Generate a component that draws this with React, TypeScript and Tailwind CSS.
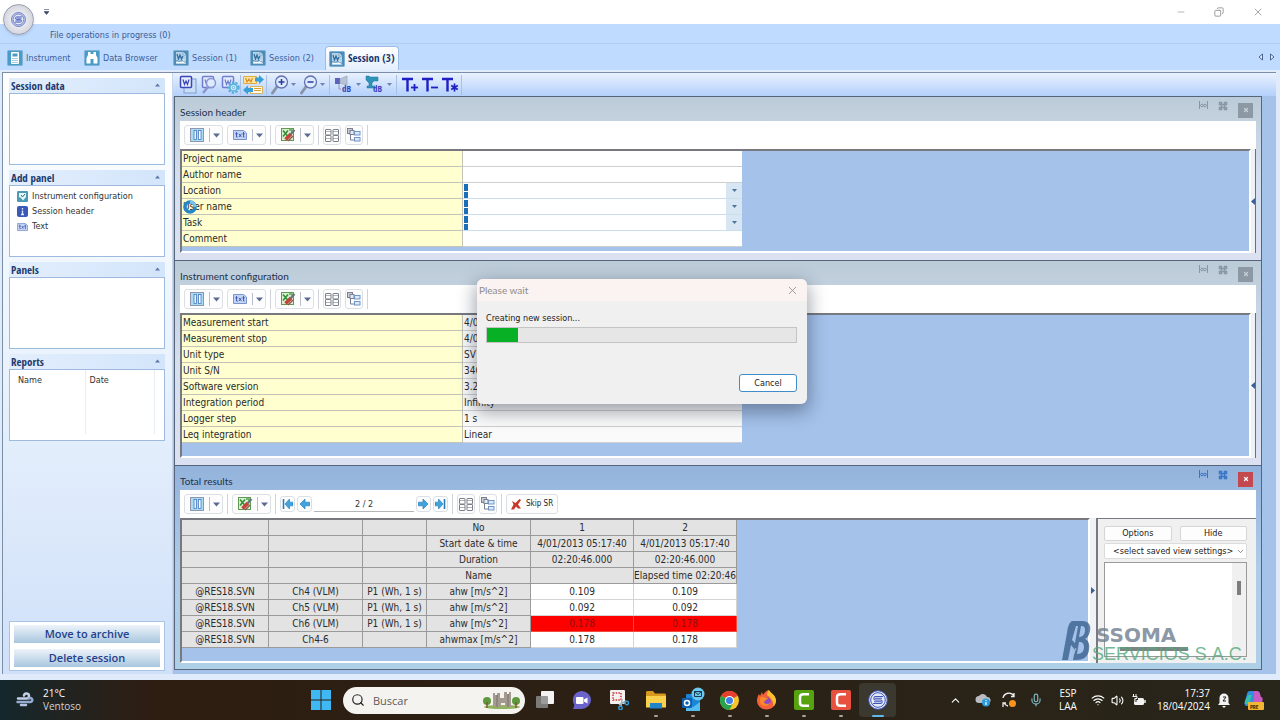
import React from "react";
import {
  Search,
  Minus,
  X,
  Copy,
  ChevronUp,
  ChevronDown,
  Wifi,
  Volume2,
  Mic,
} from "lucide-react";
import clsx from "clsx";

const UI = "font-['DejaVu_Sans_Condensed','DejaVu_Sans',sans-serif]";
const BOLD = "font-['Open_Sans_Condensed','Open_Sans',sans-serif] font-bold";

const tabs = [
  { label: "Instrument", kind: "instrument", width: "w-[77px]" },
  { label: "Data Browser", kind: "browser", width: "w-[89px]" },
  { label: "Session (1)", kind: "session", width: "w-[77px]" },
  { label: "Session (2)", kind: "session", width: "w-[80px]" },
  { label: "Session (3)", kind: "session", width: "w-[74px]", active: true },
];

const headerFields = [
  { label: "Project name", id: "project" },
  { label: "Author name", id: "author" },
  { label: "Location", id: "location", list: true },
  { label: "User name", id: "user", list: true },
  { label: "Task", id: "task", list: true },
  { label: "Comment", id: "comment" },
];

const configRows = [
  ["Measurement start", "4/01"],
  ["Measurement stop", "4/01"],
  ["Unit type", "SV 106"],
  ["Unit S/N", "34690"],
  ["Software version", "3.2"],
  ["Integration period", "Infinity"],
  ["Logger step", "1 s"],
  ["Leq integration", "Linear"],
];

const resultHead = [
  ["No", "1", "2"],
  ["Start date & time", "4/01/2013 05:17:40", "4/01/2013 05:17:40"],
  ["Duration", "02:20:46.000", "02:20:46.000"],
  ["Name", "", "Elapsed time 02:20:46"],
];

const resultRows = [
  ["@RES18.SVN", "Ch4 (VLM)", "P1 (Wh, 1 s)", "ahw [m/s^2]", "0.109", "0.109"],
  ["@RES18.SVN", "Ch5 (VLM)", "P1 (Wh, 1 s)", "ahw [m/s^2]", "0.092", "0.092"],
  ["@RES18.SVN", "Ch6 (VLM)", "P1 (Wh, 1 s)", "ahw [m/s^2]", "0.178", "0.178"],
  ["@RES18.SVN", "Ch4-6", "", "ahwmax [m/s^2]", "0.178", "0.178"],
];

/* ---------- icons ---------- */

const TabIcon: React.FC<{ kind: string }> = ({ kind }) => (
  <svg width="16" height="16" viewBox="0 0 16 16" className="shrink-0">
    <rect x="0.5" y="0.5" width="15" height="15" rx="1" fill={kind === "session" ? "#4f8cb8" : "#4a9cc8"} stroke="#7fb2d4" />
    {kind === "instrument" && (
      <>
        <rect x="4" y="2" width="8" height="12" rx="1" fill="#fff" />
        <rect x="5.5" y="3.5" width="5" height="3" fill="#4a9cc8" />
        <path d="M5.5 8.5h1M7.5 8.5h1M9.5 8.5h1M5.5 10.5h1M7.5 10.5h1M9.5 10.5h1M5.5 12.5h1M7.5 12.5h1M9.5 12.5h1" stroke="#4a9cc8" />
      </>
    )}
    {kind === "browser" && (
      <path d="M4 2h2.500v2H9.500V2H12v3l1.500 3v5.500H9.500V9h-3v4.500H2.500V8L4 5z" fill="#fff" />
    )}
    {kind === "session" && (
      <>
        <path d="M3 2h7l3 3v9H3z" fill="#b5d2e6" />
        <path d="M10 2v3h3" fill="#e3eff7" stroke="#4f8cb8" strokeWidth=".6" />
        <path d="M4 4l1.500 5L7 5l1.500 4L10 6" stroke="#2f6ca0" fill="none" strokeWidth="1.200" />
        <path d="M3 13l2.500-2.500 3 2 2-3L13 13z" fill="#fff" />
        <path d="M3 10.500l3 1 3-1 4 2" stroke="#3d7dac" fill="none" strokeWidth=".8" />
      </>
    )}
  </svg>
);

const WordPage = () => (
  <g>
    <rect x="1.500" y="1.500" width="11" height="11" rx="1" fill="#e8efff" stroke="#3a45b8" strokeWidth="1.500" />
    <path d="M4 4.500l1.500 5L7 6l1.500 3.500L10 4.500" stroke="#3a45b8" fill="none" strokeWidth="1.200" />
  </g>
);

const WordDocs = () => (
  <svg width="18" height="20" viewBox="0 0 18 20">
    <rect x="5" y="4" width="12" height="14" fill="#c9ddf4" stroke="#7f9fd0" />
    <WordPage />
  </svg>
);

const WordFind = () => (
  <svg width="16" height="20" viewBox="0 0 16 20">
    <g opacity=".65"><WordPage /></g>
    <circle cx="10" cy="8" r="4.500" fill="#dceafd" stroke="#8b94cf" strokeWidth="1.500" />
    <path d="M7 12l-5 6" stroke="#8b94cf" strokeWidth="2.500" />
  </svg>
);

const WordGear = () => (
  <svg width="19" height="20" viewBox="0 0 19 20">
    <g opacity=".65"><WordPage /></g>
    <circle cx="12.500" cy="12.500" r="5.200" fill="none" stroke="#55aeda" strokeWidth="2" strokeDasharray="2.200 1.500" />
    <circle cx="12.500" cy="12.500" r="3.600" fill="#cdeaf8" stroke="#55aeda" strokeWidth="1.500" />
    <circle cx="12.500" cy="12.500" r="1.200" fill="#fff" stroke="#55aeda" />
  </svg>
);

const SwapDocs = () => (
  <svg width="21" height="20" viewBox="0 0 21 20">
    <path d="M.5 1.500h13v7H.5z" fill="#fbe6a8" stroke="#e0ae3c" />
    <path d="M2.500 3l1.500 4 2-3 2 3 1.500-4" stroke="#e08a1c" strokeWidth="1.200" fill="none" />
    <path d="M12 2.500h4V0l5 4.500L16 9V6.500h-4z" fill="#38a0d8" />
    <path d="M7.500 11.500h12v7h-12z" fill="#fffaf0" stroke="#d8b45e" />
    <path d="M11 13.500h7M11 15.500h7" stroke="#e09a28" />
    <path d="M10 13H5v-2.500L0 15l5 4.500V17h5z" fill="#38a0d8" />
  </svg>
);

const ZoomGlass: React.FC<{ plus?: boolean }> = ({ plus }) => (
  <svg width="18" height="20" viewBox="0 0 18 20">
    <path d="M6.500 11L1.500 18" stroke="#8a93a8" strokeWidth="3" strokeLinecap="round" />
    <circle cx="10.500" cy="7" r="6" fill="#dcecff" stroke="#6670b0" strokeWidth="1.300" />
    <path d={plus ? "M7.500 7h6M10.500 4v6" : "M7.500 7h6"} stroke="#2d37a0" strokeWidth="1.500" />
  </svg>
);

const DbIcon: React.FC<{ drill?: boolean }> = ({ drill }) => (
  <svg width="20" height="20" viewBox="0 0 20 20">
    {drill ? (
      <path d="M1 1h3l1 1h8v4H9l-2 2v3h3v2H2v-2h2V8L1 5z" fill="#2f93b8" stroke="#23779c" strokeWidth=".5" />
    ) : (
      <>
        <path d="M1 3h5v6H1z" fill="#5a62bb" />
        <path d="M6 4l7-3v9L6 8z" fill="#b9c3d6" stroke="#8f9ab2" strokeWidth=".6" />
        <path d="M5 9v5h2" stroke="#8f9ab2" fill="none" />
      </>
    )}
    <text x="8" y="17" fontSize="9" fontWeight="bold" fill="#3b3fc4" fontFamily="Open Sans Condensed, sans-serif">dB</text>
  </svg>
);

const TextSize: React.FC<{ mark: string }> = ({ mark }) => (
  <svg width="18" height="20" viewBox="0 0 18 20" stroke="#1f1fc4" fill="none">
    <path d="M1 4h11M6.500 4v12.500" strokeWidth="2.400" />
    {mark !== "*" && <path d="M10 12.500h7" strokeWidth="1.800" />}
    {mark === "+" && <path d="M13.500 9v7" strokeWidth="1.800" />}
    {mark === "*" && <path d="M13.500 8.500v8M10.200 10.500l6.600 4M16.800 10.500l-6.600 4" strokeWidth="1.700" />}
  </svg>
);

const ColumnsIcon = () => (
  <svg width="14" height="14" viewBox="0 0 14 14">
    <rect x=".5" y=".5" width="13" height="13" fill="#a8dcf4" stroke="#8e97ad" />
    <rect x="4" y="2.500" width="2.500" height="9" fill="#e3f3fc" stroke="#4279c0" strokeWidth=".8" />
    <rect x="8.500" y="2.500" width="2.500" height="9" fill="#fff" stroke="#4279c0" strokeWidth=".8" />
  </svg>
);

const TxtIcon = () => (
  <svg width="14" height="12" viewBox="0 0 14 12">
    <path d="M.5 1.500h10l3 2.500v6.500H.5z" fill="#c3d3f2" stroke="#7b93cf" />
    <path d="M3.500 3v5h1.200M2.300 4.800h2.400M6 4.800l2.400 3.200M8.400 4.800L6 8M10.500 3v5h1M9.500 4.800h2.300" stroke="#3453b4" fill="none" strokeWidth=".9" />
  </svg>
);

const SheetToolIcon = () => (
  <svg width="15" height="14" viewBox="0 0 15 14">
    <rect x=".5" y=".5" width="12" height="12" fill="#dcefd0" stroke="#5e9a54" />
    <path d="M2 2.500l5 6M7 2.500l-5 6" stroke="#2f9238" strokeWidth="1.600" />
    <path d="M8 2h3v3" stroke="#53a857" fill="none" strokeWidth="1.500" />
    <path d="M4.500 11.500L10 6" stroke="#c4443a" strokeWidth="3.500" />
    <path d="M9.500 6.500L13.500 2" stroke="#6b7480" strokeWidth="2.200" />
    <path d="M7 13l5-5" stroke="#8c5a50" strokeWidth="1.500" />
  </svg>
);

const SplitIcon = () => (
  <svg width="14" height="13" viewBox="0 0 14 13" fill="#fff" stroke="#7a7f88">
    <rect x=".5" y=".5" width="5.500" height="5.500" rx=".5" />
    <rect x=".5" y="6.500" width="5.500" height="6" rx=".5" />
    <rect x="8" y=".5" width="5.500" height="5.500" rx=".5" />
    <rect x="8" y="6.500" width="5.500" height="6" rx=".5" />
    <path d="M1 2.500h5M8 2.500h5M1 9.500h5M8 9.500h5" strokeWidth=".6" />
  </svg>
);

const TreeIcon = () => (
  <svg width="14" height="14" viewBox="0 0 14 14" fill="none" stroke="#7a8090">
    <rect x=".5" y=".5" width="5" height="5" fill="#c9ced6" />
    <rect x="3" y="2.500" width="4" height="4" fill="#e8ebf0" />
    <rect x="7.500" y="3.500" width="5.500" height="3.500" fill="#dceaf8" stroke="#6e96c8" />
    <rect x="7.500" y="9.500" width="5.500" height="3.500" fill="#dceaf8" stroke="#6e96c8" />
    <path d="M3.500 7v5h4" />
  </svg>
);

const NavArrow: React.FC<{ back?: boolean; end?: boolean }> = ({ back, end }) => (
  <svg width="11" height="12" viewBox="0 0 11 12">
    <g transform={back ? "matrix(-1 0 0 1 11 0)" : undefined}>
      <path d={end ? "M0 4.200h3.500V1L8 6l-4.500 5V7.800H0z" : "M.5 4.200H5V1l5 5-5 5V7.800H.5z"} fill="#3fa3dc" stroke="#2b7fb8" strokeWidth=".7" />
      {end && <path d="M9.500 1v10" stroke="#2b7fb8" strokeWidth="1.600" />}
    </g>
  </svg>
);

const SvanLogo: React.FC<{ size: number }> = ({ size }) => (
  <svg width={size} height={size} viewBox="0 0 20 20" fill="none" stroke="#3f55b8">
    <circle cx="10" cy="10" r="9.300" fill="#e4e9f6" strokeWidth="1" />
    <circle cx="10" cy="10" r="7.300" strokeWidth="1" />
    <path d="M15 6.500H7.500c-2.200 0-2.200 3.500 0 3.500h5c2.200 0 2.200 3.500 0 3.500H5M7 8.200h7M6 11.800h7" strokeWidth="1.100" />
  </svg>
);

const Caret: React.FC<{ className?: string }> = ({ className }) => (
  <svg width="7" height="5" viewBox="0 0 7 5" className={className}>
    <path d="M0 .5h7L3.500 4.500z" fill="currentColor" />
  </svg>
);

/* ---------- ribbon ---------- */

const Divider = () => <span className="h-5 w-px bg-[#a9c0e6]" />;

const ToolButton: React.FC<{ label: string; menu?: boolean; children: React.ReactNode }> = ({ label, menu, children }) => (
  <button aria-label={label} className="flex items-center">
    {children}
    {menu && <Caret className="ml-[2px] w-[5px] text-[#6c83b4]" />}
  </button>
);

const Ribbon = () => (
  <div className="flex h-[23px] items-center bg-linear-to-b from-[#e9f1fe] to-[#b4d0fb] pl-[6px]">
    <div className="flex items-center gap-1">
      <ToolButton label="New report"><WordDocs /></ToolButton>
      <ToolButton label="Find report"><WordFind /></ToolButton>
      <ToolButton label="Report options"><WordGear /></ToolButton>
    </div>
    <div className="flex items-center gap-[2px]">
      <Divider />
      <ToolButton label="Exchange"><SwapDocs /></ToolButton>
      <Divider />
    </div>
    <div className="ml-1 flex items-center gap-1">
      <ToolButton label="Zoom in" menu><ZoomGlass plus /></ToolButton>
      <ToolButton label="Zoom out" menu><ZoomGlass /></ToolButton>
      <Divider />
      <ToolButton label="Sound level" menu><DbIcon /></ToolButton>
      <ToolButton label="Vibration level" menu><DbIcon drill /></ToolButton>
      <Divider />
    </div>
    <div className="ml-1 flex items-center gap-[2px]">
      <ToolButton label="Larger text"><TextSize mark="+" /></ToolButton>
      <ToolButton label="Smaller text"><TextSize mark="-" /></ToolButton>
      <ToolButton label="Default text"><TextSize mark="*" /></ToolButton>
      <Divider />
    </div>
  </div>
);

/* ---------- sidebar ---------- */

const SideGroup: React.FC<{ title: string; children?: React.ReactNode }> = ({ title, children }) => (
  <section className="mb-[5px]">
    <h2 className={`${BOLD} flex h-[15px] items-center justify-between bg-linear-to-r from-[#e3eefc] to-[#d3e5fb] pt-[2px] pr-[5px] pl-[2px] text-[11px] text-[#1c3a6e]`}>
      {title}
      <svg width="5" height="4" viewBox="0 0 5 4" className="mb-1"><path d="M0 3.500L2.500.5 5 3.500z" fill="#5c78a8" /></svg>
    </h2>
    <div className="h-[72px] border border-[#9ebade] bg-white">{children}</div>
  </section>
);

const panelItems = [
  {
    label: "Instrument configuration",
    icon: (
      <svg width="11" height="11" viewBox="0 0 11 11">
        <rect width="11" height="11" rx="1" fill="#4b9bb4" />
        <path d="M2 2h7v4L6 9.500 4 7 2 6z" fill="#eaf6fa" />
        <path d="M4 4l1.500 2L8 3" stroke="#28728c" fill="none" />
      </svg>
    ),
  },
  {
    label: "Session header",
    icon: (
      <svg width="11" height="11" viewBox="0 0 11 11">
        <rect width="11" height="11" rx="2" fill="#3a58b8" />
        <path d="M5.500 2v1.500M5.500 4.500V8M4 8.500h3" stroke="#e3ebff" strokeWidth="1.300" />
      </svg>
    ),
  },
  { label: "Text", icon: <TxtIcon /> },
];

const Sidebar = () => (
  <aside className="flex w-[170px] shrink-0 flex-col border-r border-[#c5d6ee] bg-linear-to-b from-white via-[#e9f2fd] to-[#cfe0f8] pt-[5px] pr-[7px] pl-[6px]">
    <SideGroup title="Session data" />
    <SideGroup title="Add panel">
      <ul className="pt-[3px] pl-[7px]">
        {panelItems.map((item) => (
          <li key={item.label}>
            <button className="flex h-[15px] items-center gap-1 text-[9px] text-[#333]">
              <span className="flex w-[11px] justify-center">{item.icon}</span>
              {item.label}
            </button>
          </li>
        ))}
      </ul>
    </SideGroup>
    <SideGroup title="Panels" />
    <SideGroup title="Reports">
      <table className="h-[64px] w-[145px] text-left text-[9px] text-[#333]">
        <thead>
          <tr>
            <th className="w-[75px] border-r border-[#e8edf4] pt-1 pl-2 align-top font-normal">Name</th>
            <th className="border-r border-[#e8edf4] pt-1 pl-1 align-top font-normal">Date</th>
          </tr>
        </thead>
      </table>
    </SideGroup>
    <div className="mt-auto mb-[3px] flex flex-col gap-[6px] border border-[#a8c4e6] bg-white px-1 py-[3px]">
      {["Move to archive", "Delete session"].map((label) => (
        <button
          key={label}
          className="h-[18px] bg-linear-to-b from-[#edf3fa] to-[#a9c6de] font-['Open_Sans',sans-serif] text-[11px] leading-[18px] font-semibold text-[#24408c]"
        >
          {label}
        </button>
      ))}
    </div>
  </aside>
);

/* ---------- panels ---------- */

const SplitButton: React.FC<{ label: string; children: React.ReactNode }> = ({ label, children }) => (
  <button aria-label={label} className="flex h-[20px] w-[39px] items-center rounded-[3px] border border-[#dcdfe4] bg-[#fdfdfd]">
    <span className="flex w-[25px] justify-center border-r border-[#b9bec8]">{children}</span>
    <span className="flex flex-1 justify-center"><Caret className="text-[#5c6b94]" /></span>
  </button>
);

const SquareButton: React.FC<{ label: string; narrow?: boolean; children: React.ReactNode }> = ({ label, narrow, children }) => (
  <button
    aria-label={label}
    className={clsx(
      "flex items-center justify-center rounded-[3px] border border-[#dcdfe4] bg-[#fdfdfd]",
      narrow ? "h-4 w-[15px]" : "h-[20px] w-[18px]"
    )}
  >
    {children}
  </button>
);

const BarLine = () => <span className="h-[20px] w-px bg-[#d0d4da]" />;

const LayoutButtons = () => (
  <>
    <SquareButton label="Split view"><SplitIcon /></SquareButton>
    <SquareButton label="Tree view"><TreeIcon /></SquareButton>
    <BarLine />
  </>
);

const EditButtons = () => (
  <>
    <SplitButton label="Columns"><ColumnsIcon /></SplitButton>
    <SplitButton label="Text"><TxtIcon /></SplitButton>
    <BarLine />
    <SplitButton label="Export"><SheetToolIcon /></SplitButton>
    <BarLine />
    <LayoutButtons />
  </>
);

interface PanelProps {
  title: string;
  active?: boolean;
  bodyClass: string;
  toolbar: React.ReactNode;
  aside?: React.ReactNode;
  children: React.ReactNode;
}

const Panel: React.FC<PanelProps> = ({ title, active, bodyClass, toolbar, aside, children }) => (
  <section
    className={clsx(
      "flex flex-col border-t border-r border-l border-[#56657a] px-[5px]",
      active ? "flex-1 border-b bg-linear-to-b from-[#94b3dc] via-[#aecbe8] to-[#aed0e6] pb-[6px]" : "bg-linear-to-b from-[#bccbd8] via-[#d5e0ee] to-[#dbe1f0] pb-[7px]"
    )}
  >
    <div className="flex h-[24px] items-center">
      <h2 className="flex-1 pt-[6px] font-['Lato',sans-serif] text-[10px] leading-4 text-[#22304a]">{title}</h2>
      <div className={clsx("flex items-start gap-[10px] pr-[3px]", active ? "text-[#3a76c4]" : "text-[#8797a5]")}>
        <button aria-label="Fit width">
          <svg width="9" height="8" viewBox="0 0 9 8" fill="none" stroke="currentColor">
            <path d="M.5 0v8M8.500 0v8" />
            <circle cx="3" cy="4.500" r="1.300" />
            <circle cx="6" cy="4.500" r="1.300" />
          </svg>
        </button>
        <button aria-label="Maximize panel">
          <svg width="10" height="10" viewBox="0 0 10 10" fill="none" stroke="currentColor" strokeWidth="1.500">
            <path d="M3.500 3.500h3v3h-3zM3.500 3.500h-2v-2h2zM6.500 3.500v-2h2v2zM3.500 6.500v2h-2v-2zM6.500 6.500h2v2h-2z" />
          </svg>
        </button>
        <button
          aria-label="Close panel"
          className={clsx("mt-[2px] flex h-[15px] w-[15px] items-center justify-center", active ? "bg-[#c4494f] text-white" : "bg-[#8c98a4] text-[#c5ced6]")}
        >
          <X size={6} strokeWidth={5} />
        </button>
      </div>
    </div>
    <div className="flex h-[28px] items-center gap-1 bg-white pl-1">{toolbar}</div>
    <div className="flex flex-1">
      <div className={clsx("flex-1 border-2 border-t-[#77797f] border-r-white border-b-white border-l-[#77797f] bg-[#a4c2ea]", bodyClass)}>
        {children}
      </div>
      {aside ?? (
        <div className="flex w-[5px] items-center border-r border-[#6a7078] bg-[#eef1f5]">
          <svg width="4" height="7" viewBox="0 0 4 7"><path d="M4 0v7L0 3.500z" fill="#3d5f98" /></svg>
        </div>
      )}
    </div>
  </section>
);

const gridTable = "border-separate border-spacing-0 table-fixed text-[10px] text-[#2b2b2b]";
const nameCell = "w-[281px] border-r border-b border-[#c3c3b8] bg-[#ffffcf] p-0 pl-px text-left leading-[15px] font-normal";

const HeaderForm = () => (
  <table className={`${gridTable} w-[560px]`}>
    <tbody>
      {headerFields.map((f) => (
        <tr key={f.id} className="h-4">
          <th className={nameCell}>
            <label htmlFor={f.id}>{f.label}</label>
          </th>
          <td className={clsx("border-b bg-white p-0", f.list ? "border-[#c9dfee]" : "border-[#cfcfcf]")}>
            {f.list ? (
              <div className="flex h-[15px] items-center">
                <span className="ml-px flex w-1 flex-col gap-px">
                  <span className="h-[7px] bg-[#1a6fb8]" />
                  <span className="h-[6px] bg-[#1a6fb8]" />
                </span>
                <select id={f.id} className="h-[15px] flex-1 appearance-none bg-white outline-none">
                  <option></option>
                </select>
                <span className="pointer-events-none flex h-[15px] w-4 items-center justify-center bg-[#d8e6f3]">
                  <Caret className="w-[5px] text-[#4f7396]" />
                </span>
              </div>
            ) : (
              <input id={f.id} className="block h-[15px] w-full bg-white px-px outline-none" />
            )}
          </td>
        </tr>
      ))}
    </tbody>
  </table>
);

const ConfigTable = () => (
  <table className={`${gridTable} w-[560px]`}>
    <tbody>
      {configRows.map(([name, value]) => (
        <tr key={name} className="h-4">
          <th className={nameCell}>{name}</th>
          <td className="border-b border-[#cfcfcf] bg-[#fafafa] p-0 pl-px leading-[15px]">{value}</td>
        </tr>
      ))}
    </tbody>
  </table>
);

const headCell = "border-r border-b border-[#9a9a9a] bg-[#e3e3e3] p-0 leading-[15px] font-normal whitespace-nowrap";

const ResultsTable = () => (
  <table className={`${gridTable} w-[555px] text-center`}>
    <colgroup>
      <col className="w-[87px]" />
      <col className="w-[94px]" />
      <col className="w-[64px]" />
      <col className="w-[104px]" />
      <col className="w-[103px]" />
      <col className="w-[103px]" />
    </colgroup>
    <thead>
      {resultHead.map(([name, a, b]) => (
        <tr key={name} className="h-4">
          <td className={headCell} />
          <td className={headCell} />
          <td className={headCell} />
          <th className={headCell}>{name}</th>
          <th className={headCell}>{a}</th>
          <th className={headCell}>{b}</th>
        </tr>
      ))}
    </thead>
    <tbody>
      {resultRows.map((row, r) => (
        <tr key={r} className="h-4">
          {row.map((cell, i) =>
            i < 4 ? (
              <th key={i} className={headCell}>{cell}</th>
            ) : (
              <td
                key={i}
                className={clsx(
                  "border-r border-b p-0 leading-[15px]",
                  r === 2 ? "border-[#f04a3c] bg-[#fe0000] text-[#8c1010]" : "border-[#d4d4d4] bg-white"
                )}
              >
                {cell}
              </td>
            )
          )}
        </tr>
      ))}
    </tbody>
  </table>
);

const ViewSettings = () => (
  <>
    <div className="flex w-[6px] items-center bg-[#eef2f7]">
      <svg width="5" height="7" viewBox="0 0 5 7"><path d="M1 0v7l4-3.500z" fill="#3d5f98" /></svg>
    </div>
    <div className="relative flex w-[160px] flex-col border-t border-l-2 border-[#77797f] bg-[#f0f0f0] pt-[7px] pr-[9px] pb-[6px] pl-[6px] text-[9px] text-[#222]">
      <div className="flex gap-2">
        <button className="h-[15px] flex-1 rounded-[2px] border border-[#d6d6d6] bg-[#fdfdfd] leading-[13px]">Options</button>
        <button className="h-[15px] flex-1 rounded-[2px] border border-[#d6d6d6] bg-[#fdfdfd] leading-[13px]">Hide</button>
      </div>
      <div className="relative mt-[2px]">
        <select aria-label="View settings" className="block h-[16px] w-full appearance-none rounded-[2px] border border-[#dcdcdc] bg-white pl-[8px] text-[9px] leading-[14px]">
          <option>&lt;select saved view settings&gt;</option>
        </select>
        <ChevronDown size={9} className="pointer-events-none absolute top-1 right-[2px] text-[#666]" />
      </div>
      <div className="mt-[3px] flex flex-1 justify-end border border-[#9a9a9a] bg-white">
        <div className="flex w-[14px] justify-center bg-[#f0f0f0] pt-[18px]">
          <span className="h-[14px] w-1 bg-[#7d7d7d]" />
        </div>
      </div>
      <span className="absolute bottom-[12px] left-[22px] h-1 w-[68px] bg-[#7d8484]" />
      <div className="pointer-events-none absolute -bottom-px -left-[36px] flex opacity-80">
        <svg width="30" height="41" viewBox="0 0 30 41" className="shrink-0">
          <path fillRule="evenodd" d="M10 1H20C28 1 29 7 28 11 27 16 25 18 23 19 27 21 28 25 27 30 26 37 21 40 14 40H11L13 30 9 25 6 40H0L5 13C6 6 7 3 10 1ZM14 6 10 20 13 23 16 6ZM19 6 17 17C21 17 23 14 23 10 23 7 22 6 19 6ZM17 22 15 34C20 34 22 31 22 27 22 24 21 22 17 22Z" fill="#3d628f" />
          <path d="M10 28l2 5 2-5M12 33l-2 5" stroke="#9cc5d6" fill="none" />
        </svg>
        <div className="pt-[6px] whitespace-nowrap">
          <p className="pl-1 font-['DejaVu_Sans',sans-serif] text-[20px] leading-[18px] font-bold text-[#707f90]">SSOMA</p>
          <p className="font-['Liberation_Sans',sans-serif] text-[18px] leading-[20px] text-[#55a87c]">SERVICIOS S.A.C.</p>
        </div>
      </div>
    </div>
  </>
);

const ResultsToolbar = () => (
  <>
    <SplitButton label="Columns"><ColumnsIcon /></SplitButton>
    <BarLine />
    <SplitButton label="Export"><SheetToolIcon /></SplitButton>
    <BarLine />
    <div className="flex items-end gap-[2px]">
      <SquareButton label="First" narrow><NavArrow back end /></SquareButton>
      <SquareButton label="Previous" narrow><NavArrow back /></SquareButton>
      <input
        aria-label="Record"
        defaultValue="2 / 2"
        className="h-4 w-[100px] border-b border-[#b5b5b5] text-center text-[9px] text-[#333] outline-none"
      />
      <SquareButton label="Next" narrow><NavArrow /></SquareButton>
      <SquareButton label="Last" narrow><NavArrow end /></SquareButton>
    </div>
    <BarLine />
    <LayoutButtons />
    <button className="flex h-[20px] items-center gap-1 rounded-[3px] border border-[#dcdfe4] bg-[#fdfdfd] px-1 text-[8px] text-[#222]">
      <svg width="11" height="11" viewBox="0 0 11 11"><path d="M1 2l3.500 2L8.500 0l1.500 1-3 4.500L10 9.500H7L5 7.500 3 10.500H0l2.500-5z" fill="#c8382a" /></svg>
      Skip SR
    </button>
  </>
);

/* ---------- dialog ---------- */

const WaitDialog = () => (
  <div
    role="dialog"
    aria-labelledby="wait-title"
    className="absolute top-[279px] left-[477px] w-[330px] rounded-md bg-[#f0f0f0] text-[#222] shadow-[0_6px_18px_2px_rgba(20,30,50,0.4)]"
  >
    <div className="flex h-[22px] items-center justify-between rounded-t-md bg-[#fbf3f1] pr-2 pl-[2px] text-[#8f8b8a]">
      <h2 id="wait-title" className="font-['Lato',sans-serif] text-[10px]">Please wait</h2>
      <button aria-label="Close"><X size={13} strokeWidth={1.500} /></button>
    </div>
    <div className="pt-[10px] pr-[10px] pb-[12px] pl-[9px] text-[9px]">
      <label htmlFor="wait-progress" className="block leading-[15px]">Creating new session...</label>
      <div id="wait-progress" role="progressbar" aria-valuenow={10} className="mt-px h-[16px] border border-[#c4c4c4] bg-[#e6e6e6]">
        <div className="h-[14px] w-[31px] bg-[#08b025]" />
      </div>
      <div className="mt-[31px] flex justify-end">
        <button className="h-[18px] w-[58px] rounded-[3px] border border-[#3f8cc8] bg-white leading-[16px]">Cancel</button>
      </div>
    </div>
  </div>
);

/* ---------- taskbar ---------- */

const Camtasia: React.FC<{ color: string }> = ({ color }) => (
  <svg width="20" height="20" viewBox="0 0 20 20">
    <rect width="20" height="20" rx="2" fill={color} />
    <path d="M15 4.200H9.500C7 4.200 6 5.500 6 7v6c0 1.500 1 2.800 3.500 2.800H15" stroke="#fff" strokeWidth="2.500" fill="none" />
  </svg>
);

const apps = [
  {
    name: "Task view",
    icon: (
      <svg width="18" height="18" viewBox="0 0 18 18">
        <rect x="5" y="0" width="13" height="13" rx="1" fill="#f3f3f3" />
        <rect x="0" y="5" width="12" height="12" rx="1" fill="#8b8b8b" opacity=".85" />
      </svg>
    ),
  },
  {
    name: "Chat",
    icon: (
      <svg width="19" height="19" viewBox="0 0 19 19">
        <path d="M9.500 0a9.500 9 0 1 1 0 18H1l1.500-4A9.500 9 0 0 1 9.500 0z" fill="#6a63cc" />
        <rect x="4" y="6" width="7.500" height="7" rx="1" fill="#fff" />
        <path d="M12 8.500l3.500-2v6l-3.500-2z" fill="#fff" />
      </svg>
    ),
  },
  {
    name: "Snipping Tool",
    icon: (
      <svg width="20" height="20" viewBox="0 0 20 20">
        <rect x="1" y="0" width="15" height="14" rx="1" fill="#f4f1f0" />
        <rect x="4" y="3" width="8" height="7" fill="none" stroke="#c8393b" strokeWidth="1.500" strokeDasharray="1.500 1.200" />
        <path d="M10 15l7-4M13 9l-1 8" stroke="#9fb2bf" strokeWidth="1.500" />
        <circle cx="17.800" cy="13" r="1.700" fill="none" stroke="#2e9bd6" strokeWidth="1.400" />
        <circle cx="11.500" cy="18" r="1.700" fill="none" stroke="#2e9bd6" strokeWidth="1.400" />
      </svg>
    ),
  },
  {
    name: "File Explorer",
    running: true,
    icon: (
      <svg width="20" height="18" viewBox="0 0 20 18">
        <path d="M0 1.500C0 .7.700 0 1.500 0H7l2 2.500h9.500c.8 0 1.500.7 1.500 1.500v12H0z" fill="#d9981e" />
        <path d="M0 5h20v11.500H0z" fill="#fbd04c" />
        <path d="M4 12h12v5.500H4z" fill="#1f86c9" />
      </svg>
    ),
  },
  {
    name: "Outlook",
    running: true,
    icon: (
      <svg width="24" height="26" viewBox="0 0 24 26">
        <rect x="5" y="7" width="14" height="17" rx="1" fill="#1a84d6" />
        <path d="M5 15l7 5 7-5v9H5z" fill="#53bdf0" />
        <rect x="1" y="11" width="10" height="10" rx="1" fill="#0f5fb0" />
        <circle cx="6" cy="16" r="2.500" fill="none" stroke="#fff" strokeWidth="1.500" />
        <circle cx="17" cy="7" r="6.500" fill="#6cc8ee" />
        <path d="M13.500 4.500h7v5h-7zM13.500 4.500L17 7.500l3.500-3" fill="none" stroke="#17384d" />
      </svg>
    ),
  },
  {
    name: "Chrome",
    running: true,
    icon: (
      <svg width="19" height="19" viewBox="0 0 20 20">
        <circle cx="10" cy="10" r="10" fill="#f7c52b" />
        <path d="M10 10L1.300 5A10 10 0 0 1 18.700 5z" fill="#e5402f" />
        <path d="M10 10L1.300 5A10 10 0 0 0 10 20l4-8z" fill="#2ba24c" />
        <circle cx="10" cy="10" r="4.800" fill="#fff" />
        <circle cx="10" cy="10" r="3.700" fill="#3f7fe8" />
      </svg>
    ),
  },
  {
    name: "Firefox",
    running: true,
    icon: (
      <svg width="19" height="20" viewBox="0 0 19 20">
        <path d="M9.500 19.500C4 19.500 0 15.500 0 10.500 0 8 1 5.500 2 4l1 2 2-4 1 3c1-2 4-5 6-5 0 2 6 4 7 10 0 5.500-4 9.500-9.500 9.500z" fill="#f5613a" />
        <path d="M12 0c1 3 6 4 7 10 0 3-1 5-2.500 6.500C17 11 13 7 10 5c0-2 1-4 2-5z" fill="#fcc02e" />
        <circle cx="9.500" cy="11.500" r="4.300" fill="#8c49c8" />
        <path d="M3 8c3-2 5 0 8 0-1 2-3 2-4 4 1 3 4 2 6 1-1 4-9 4-10-1z" fill="#fb8a26" />
      </svg>
    ),
  },
  { name: "Camtasia", running: true, icon: <Camtasia color="#56a30f" /> },
  { name: "Camtasia Recorder", running: true, icon: <Camtasia color="#e8513f" /> },
  { name: "Supervisor", running: true, active: true, icon: <SvanLogo size={20} /> },
];

const Taskbar = () => (
  <footer className="flex h-[40px] items-center bg-linear-to-r from-[#14272c] via-[#2e1d11] via-12% to-[#28251a] font-['Open_Sans',sans-serif] text-[10px] leading-[13px] text-white">
    <button className="flex w-[303px] items-center gap-2 pl-4 text-left">
      <svg width="19" height="16" viewBox="0 0 19 16" fill="none" strokeLinecap="round" strokeWidth="2.500">
        <path d="M2 6.500h8.500a2.500 2.500 0 1 0-2.500-3" stroke="#c3d0e6" />
        <path d="M1.500 10h13a2 2 0 1 0-1.500-3.500" stroke="#94abd2" />
        <path d="M5 13h5" stroke="#b4c4e0" />
      </svg>
      <span>
        21°C
        <br />
        <span className="text-[#d5d0cb]">Ventoso</span>
      </span>
    </button>
    <button aria-label="Start" className="flex w-[36px] justify-center">
      <svg width="20" height="20" viewBox="0 0 20 20" fill="#3fb8f4">
        <path d="M0 0h9.500v9.500H0zM10.500 0H20v9.500h-9.500zM0 10.500h9.500V20H0zM10.500 10.500H20V20h-9.500z" />
      </svg>
    </button>
    <label className="ml-1 flex h-[27px] w-[182px] items-center gap-2 rounded-full bg-[#f5f3f0] px-2 text-[#222]">
      <Search size={14} strokeWidth={2} className="shrink-0" />
      <input aria-label="Buscar" placeholder="Buscar" className="w-[102px] text-[11px] outline-none placeholder:text-[#5c5a58]" />
      <svg width="38" height="20" viewBox="0 0 38 20" className="shrink-0">
        <ellipse cx="19" cy="17" rx="18" ry="2" fill="#8fb35a" />
        <path d="M10 17V3h2v2h2V3h3v5h4V2h3v2h2V2h2v15h-6v-4h-4v4z" fill="#a49a90" />
        <path d="M14 5v12M25 4v13" stroke="#7b7168" />
        <circle cx="4" cy="11" r="4" fill="#5e9a3c" /><circle cx="33" cy="11" r="4" fill="#5e9a3c" />
        <path d="M4 12v6M33 12v6" stroke="#80592f" strokeWidth="1.500" />
      </svg>
    </label>
    <nav className="ml-px flex">
      {apps.map((app) => (
        <button
          key={app.name}
          aria-label={app.name}
          className={clsx("relative flex h-[34px] w-[37px] items-center justify-center rounded-sm", app.active && "bg-[#3b392f]")}
        >
          {app.icon}
          {app.running && (
            <span className={clsx("absolute bottom-0 h-[2px] rounded-full", app.active ? "w-3 bg-[#5fb8ec]" : "w-1 bg-[#a8a49c]")} />
          )}
        </button>
      ))}
    </nav>
    <div className="ml-auto flex items-center pr-4">
      <ChevronUp size={13} />
      <svg width="16" height="14" viewBox="0 0 16 14" className="ml-[13px]">
        <path d="M4 10a3.500 3.500 0 0 1 0-7 4.500 4.500 0 0 1 8 1 3 3 0 0 1 1 6z" fill="#b9bcc0" />
        <circle cx="11" cy="9.500" r="4" fill="#2a9be0" /><path d="M11 7v1M11 9v3" stroke="#fff" strokeWidth="1.200" />
      </svg>
      <svg width="15" height="16" viewBox="0 0 15 16" className="ml-[11px]" fill="none" stroke="#f0f0f0" strokeWidth="1.300">
        <path d="M1 6a6 6 0 0 1 11-2M12 1v3.500H9M1 15v-4h3M2 11a6 6 0 0 0 4 3" />
        <circle cx="10.500" cy="11.500" r="3.500" fill="#f7941d" stroke="none" />
      </svg>
      <Mic size={14} className="ml-3 text-[#7fb9c4]" />
      <span className="ml-4 text-center leading-[13px]">ESP<br />LAA</span>
      <Wifi size={14} className="ml-[14px]" />
      <Volume2 size={13} className="ml-[6px]" />
      <svg width="14" height="12" viewBox="0 0 14 12" className="ml-2">
        <rect x="2" y="4" width="10" height="7" rx="1.500" fill="#f2f2f2" />
        <path d="M13 6v3" stroke="#f2f2f2" strokeWidth="1.500" />
        <path d="M1 0v2M4 0v2M0 2.500h5V5H3.500v3" stroke="#28251a" strokeWidth="2" fill="none" />
        <path d="M1.500 0v2M4 0v2M.5 2.500h4.500v2h-2V8" stroke="#f2f2f2" fill="none" />
      </svg>
      <span className="ml-[11px] text-right leading-[13px]">17:37<br />18/04/2024</span>
      <svg width="12" height="15" viewBox="0 0 12 15" className="ml-2" fill="#f2f2f2">
        <path d="M0 12l1.500-2V5a4.500 4.500 0 0 1 9 0v5l1.500 2zM4 13h4l-2 2z" />
        <path d="M5 4h3L5 8h3" stroke="#28251a" fill="none" />
      </svg>
      <svg width="20" height="20" viewBox="0 0 20 20" className="ml-[14px]">
        <path d="M6 1h6c2 0 3 2 2.500 4L12 13c-.5 2-2 3-4 3H3c-2 0-3-2-2-5l2-7C3.500 2 4 1 6 1z" fill="#2f8fe0" />
        <path d="M10 1h3c3 0 3 3 4 6 2 0 2 3 1 6l-1 3H9c-2 0 0-3 1-6z" fill="#c85cc4" />
        <path d="M4 5h4L5 14H1c-1-3 2-6 3-9z" fill="#37c0a8" />
        <rect x="4" y="12" width="16" height="8" rx="1" fill="#f2b632" />
        <text x="6" y="18.500" fontSize="6" fontWeight="bold" fill="#3a2a08" fontFamily="Open Sans Condensed, sans-serif">PRE</text>
      </svg>
    </div>
  </footer>
);

/* ---------- window ---------- */

export default function App() {
  return (
    <div className={`${UI} relative flex min-h-screen flex-col bg-[#bfdbff] text-[9px]`}>
      <header className="flex h-[24px] items-center bg-white">
        <button
          aria-label="Application menu"
          className="absolute top-1 left-[3px] flex h-[31px] w-[31px] items-center justify-center rounded-full border border-[#9a9fb0] bg-radial from-white to-[#c3c6d2] shadow"
        >
          <SvanLogo size={15} />
        </button>
        <button aria-label="Customize quick access" className="ml-[44px]">
          <svg width="5" height="6" viewBox="0 0 5 6"><path d="M0 .5h5M0 2.500h5L2.500 5.500z" fill="#3b4a68" stroke="#3b4a68" strokeWidth=".6" /></svg>
        </button>
        <div className="ml-auto flex items-center gap-[28px] pr-4 text-[#8b8b8b]">
          <button aria-label="Minimize"><Minus size={10} strokeWidth={1.500} /></button>
          <button aria-label="Restore"><Copy size={10} strokeWidth={2} className="-scale-x-100" /></button>
          <button aria-label="Close"><X size={12} strokeWidth={1.500} /></button>
        </div>
      </header>

      <p className="h-[20px] border-b border-[#b0cdf4] pt-[3px] pl-[50px] leading-4 text-[#3c5a94]">
        File operations in progress (0)
      </p>

      <nav className="flex h-[26px] items-end pl-[2px]">
        {tabs.map((tab) => (
          <button
            key={tab.label}
            className={clsx(
              "flex h-[24px] items-center gap-[3px] whitespace-nowrap",
              tab.width,
              tab.active
                ? `${BOLD} rounded-t-sm border-x border-t border-[#9dbde8] bg-linear-to-b from-white to-[#e4effd] pl-[3px] text-[11px] text-[#17366e]`
                : "pl-[5px] text-[#3f5e98]"
            )}
          >
            <TabIcon kind={tab.kind} />
            <span className={clsx(!tab.active && "pt-[2px]")}>{tab.label}</span>
          </button>
        ))}
        <div className="mr-[5px] ml-auto flex h-[26px] items-center gap-[7px]">
          <button aria-label="Scroll tabs left"><svg width="5" height="8" viewBox="0 0 5 8"><path d="M4.500 1v6L1 4z" fill="#e4effd" stroke="#4a6290" /></svg></button>
          <button aria-label="Scroll tabs right"><svg width="5" height="8" viewBox="0 0 5 8"><path d="M.5 1v6L4 4z" fill="#e4effd" stroke="#4a6290" /></svg></button>
        </div>
      </nav>

      <div className="flex flex-1 flex-col border-t-2 border-r-4 border-b-[6px] border-l-2 border-[#dfebfb]">
        <main className="flex flex-1 border-t border-l border-[#7b8ea8]">
          <Sidebar />
          <div className="flex flex-1 flex-col bg-[#a4c2ea]">
            <Ribbon />
            <div className="mr-[14px] mb-1 ml-px flex flex-1 flex-col">
              <Panel title="Session header" bodyClass="pb-1" toolbar={<EditButtons />}>
                <HeaderForm />
              </Panel>
              <Panel title="Instrument configuration" bodyClass="pb-[13px]" toolbar={<EditButtons />}>
                <ConfigTable />
              </Panel>
              <Panel title="Total results" active bodyClass="pb-[12px]" toolbar={<ResultsToolbar />} aside={<ViewSettings />}>
                <ResultsTable />
              </Panel>
            </div>
          </div>
        </main>
      </div>

      <Taskbar />

      <svg width="16" height="16" viewBox="0 0 16 16" className="absolute top-[199px] left-[182px]">
        <circle cx="8" cy="8" r="5" fill="none" stroke="#2386c8" strokeWidth="3.500" />
        <path d="M8 3a5 5 0 0 1 5 5" fill="none" stroke="#7cc3ea" strokeWidth="3" />
      </svg>

      <WaitDialog />
    </div>
  );
}
